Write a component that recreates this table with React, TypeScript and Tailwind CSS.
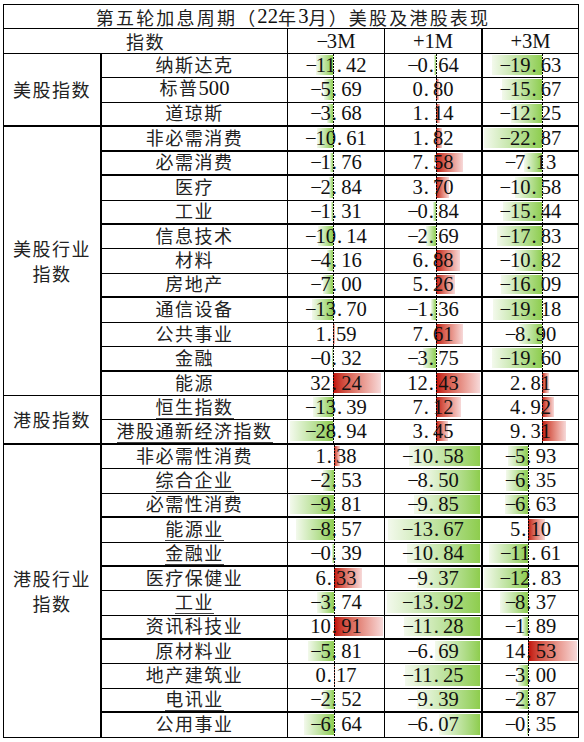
import React from "react";

type RowT = { n: string; v: [number, number, number]; ul?: boolean };
type SecT = { label: string[]; sec: 0 | 1; rows: RowT[]; thickBottom: boolean; span: string };

const AX = [
  [45, 51, 59],
  [46, 95, 45],
];
const SC = [
  [1.5, 3.54, 2.54],
  [4.45, 6.7, 3.4],
];
const SHOW = [
  [true, true, true],
  [true, false, true],
];
const THICK = new Set([3, 4, 5, 7, 10, 13, 16, 19, 21, 24, 27]);

const SECTIONS: SecT[] = [
  {
    label: ["美股指数"],
    sec: 0,
    thickBottom: true,
    span: "row-span-3",
    rows: [
      { n: "纳斯达克", v: [-11.42, -0.64, -19.63] },
      { n: "标普500", v: [-5.69, 0.8, -15.67] },
      { n: "道琼斯", v: [-3.68, 1.14, -12.25] },
    ],
  },
  {
    label: ["美股行业", "指数"],
    sec: 0,
    thickBottom: false,
    span: "row-span-11",
    rows: [
      { n: "非必需消费", v: [-10.61, 1.82, -22.87] },
      { n: "必需消费", v: [-1.76, 7.58, -7.13] },
      { n: "医疗", v: [-2.84, 3.7, -10.58] },
      { n: "工业", v: [-1.31, -0.84, -15.44] },
      { n: "信息技术", v: [-10.14, -2.69, -17.83] },
      { n: "材料", v: [-4.16, 6.88, -10.82] },
      { n: "房地产", v: [-7.0, 5.26, -16.09] },
      { n: "通信设备", v: [-13.7, -1.36, -19.18] },
      { n: "公共事业", v: [1.59, 7.61, -8.9] },
      { n: "金融", v: [-0.32, -3.75, -19.6] },
      { n: "能源", v: [32.24, 12.43, 2.81] },
    ],
  },
  {
    label: ["港股指数"],
    sec: 0,
    thickBottom: true,
    span: "row-span-2",
    rows: [
      { n: "恒生指数", v: [-13.39, 7.12, 4.92], ul: true },
      { n: "港股通新经济指数", v: [-28.94, 3.45, 9.31], ul: true },
    ],
  },
  {
    label: ["港股行业", "指数"],
    sec: 1,
    thickBottom: false,
    span: "row-span-12",
    rows: [
      { n: "非必需性消费", v: [1.38, -10.58, -5.93] },
      { n: "综合企业", v: [-2.53, -8.5, -6.35], ul: true },
      { n: "必需性消费", v: [-9.81, -9.85, -6.63] },
      { n: "能源业", v: [-8.57, -13.67, 5.1], ul: true },
      { n: "金融业", v: [-0.39, -10.84, -11.61], ul: true },
      { n: "医疗保健业", v: [6.33, -9.37, -12.83] },
      { n: "工业", v: [-3.74, -13.92, -8.37], ul: true },
      { n: "资讯科技业", v: [10.91, -11.28, -1.89] },
      { n: "原材料业", v: [-5.81, -6.69, 14.53] },
      { n: "地产建筑业", v: [0.17, -11.25, -3.0] },
      { n: "电讯业", v: [-2.52, -9.39, -2.87], ul: true },
      { n: "公用事业", v: [-6.64, -6.07, -0.35] },
    ],
  },
];

function Mono({ s }: { s: string }) {
  const parts = s.match(/−|\.|[^−.]+/g) ?? [];
  return (
    <span className="inline-flex items-baseline whitespace-nowrap font-['Liberation_Serif',serif] text-[20.6px] leading-none text-[#111]">
      {parts.map((p, i) =>
        p === "." ? (
          <span key={i} className="inline-block w-[10.3px] pl-[1px] text-left">
            .
          </span>
        ) : p === "−" ? (
          <span key={i} className="inline-block tracking-[-1.3px]">
            −
          </span>
        ) : (
          <span key={i}>{p}</span>
        )
      )}
    </span>
  );
}

function Mixed({ s, title }: { s: string; title?: boolean }) {
  const parts = s.match(/[0-9A-Za-z.\-−+]+|[^0-9A-Za-z.\-−+]+/g) ?? [];
  return (
    <>
      {parts.map((p, i) =>
        /^[0-9A-Za-z.\-−+]/.test(p) ? (
          <Mono key={i} s={p} />
        ) : (
          <span
            key={i}
            className={
              title
                ? "font-['Noto_Sans_CJK_SC',sans-serif] text-[18px] leading-none tracking-[2.2px] text-[#222]"
                : "font-['Noto_Sans_CJK_SC',sans-serif] text-[18px] leading-none tracking-[1.5px] text-[#222]"
            }
          >
            {p}
          </span>
        )
      )}
    </>
  );
}

function fmt(v: number) {
  const s = Math.abs(v).toFixed(2);
  return v < 0 ? "−" + s : s;
}

function DataCell({ v, sec, col, thick }: { v: number; sec: number; col: number; thick: boolean }) {
  const axis = AX[sec][col];
  const w = Math.max(1, Math.abs(v) * SC[sec][col]);
  const border = (thick ? "border-b-2 " : "border-b ") + (col === 1 ? "border-r-2" : "border-r");
  return (
    <div className={`relative flex items-center justify-center border-black ${border}`}>
      {v < 0 ? (
        <div
          className="absolute top-[1px] bottom-[2px] bg-linear-to-r from-[#f3f9ec] to-[#8ecd4d]"
          style={{ left: axis - w, width: w }}
        />
      ) : (
        <div
          className="absolute top-[1px] bottom-[2px] bg-linear-to-r from-[#c00000] to-[#f6d9d9]"
          style={{ left: axis, width: w }}
        />
      )}
      {SHOW[sec][col] && (
        <div
          className="absolute top-0 bottom-0 w-px bg-[repeating-linear-gradient(to_bottom,#000_0px,#000_2px,transparent_2px,transparent_3px)]"
          style={{ left: axis }}
        />
      )}
      <span className="relative">
        <Mono s={fmt(v)} />
      </span>
    </div>
  );
}

export default function App() {
  let idx = 0;
  const cells: React.ReactNode[] = [];
  SECTIONS.forEach((s, si) => {
    s.rows.forEach((r, ri) => {
      idx += 1;
      const thick = THICK.has(idx);
      if (ri === 0) {
        cells.push(
          <div
            key={`c${si}`}
            className={`${s.span} flex flex-col items-center justify-center border-r-2 border-black ${
              s.thickBottom ? "border-b-2" : "border-b"
            }`}
          >
            {s.label.map((l, li) => (
              <div
                key={li}
                className="font-['Noto_Sans_CJK_SC',sans-serif] text-[18px] leading-[25px] tracking-[1.5px] text-[#222]"
              >
                {l}
              </div>
            ))}
          </div>
        );
      }
      cells.push(
        <div
          key={`n${idx}`}
          className={`flex items-center justify-center border-r border-black ${thick ? "border-b-2" : "border-b"}`}
        >
          <span className={r.ul ? "border-b border-[#444] pb-[2px] leading-none" : "pb-[3px] leading-none"}>
            <Mixed s={r.n} />
          </span>
        </div>
      );
      r.v.forEach((v, ci) => {
        cells.push(<DataCell key={`d${idx}-${ci}`} v={v} sec={s.sec} col={ci} thick={thick} />);
      });
    });
  });

  return (
    <div className="min-h-[742px] bg-white pl-[3px] pt-[4px]">
      <div className="grid w-[576px] grid-cols-[98px_186px_97px_98px_96px] grid-rows-[24px_25px_24px_25px_24px_25px_24px_25px_24px_24px_25px_24px_25px_24px_25px_24px_24px_25px_24px_25px_24px_25px_24px_24px_25px_24px_24px_25px_24px_25px] border-l border-t border-black">
        <div className="col-span-5 flex items-center justify-center border-r border-b border-black">
          <span className="inline-flex items-center pl-[4px]">
            <Mixed s="第五轮加息周期（22年3月）美股及港股表现" title />
          </span>
        </div>
        <div className="col-span-2 flex items-center justify-center border-r border-b border-black">
          <Mixed s="指数" />
        </div>
        <div className="flex items-center justify-center border-r border-b border-black">
          <Mono s="−3M" />
        </div>
        <div className="flex items-center justify-center border-r-2 border-b border-black">
          <Mono s="+1M" />
        </div>
        <div className="flex items-center justify-center border-r border-b border-black">
          <Mono s="+3M" />
        </div>
        {cells}
      </div>
    </div>
  );
}
